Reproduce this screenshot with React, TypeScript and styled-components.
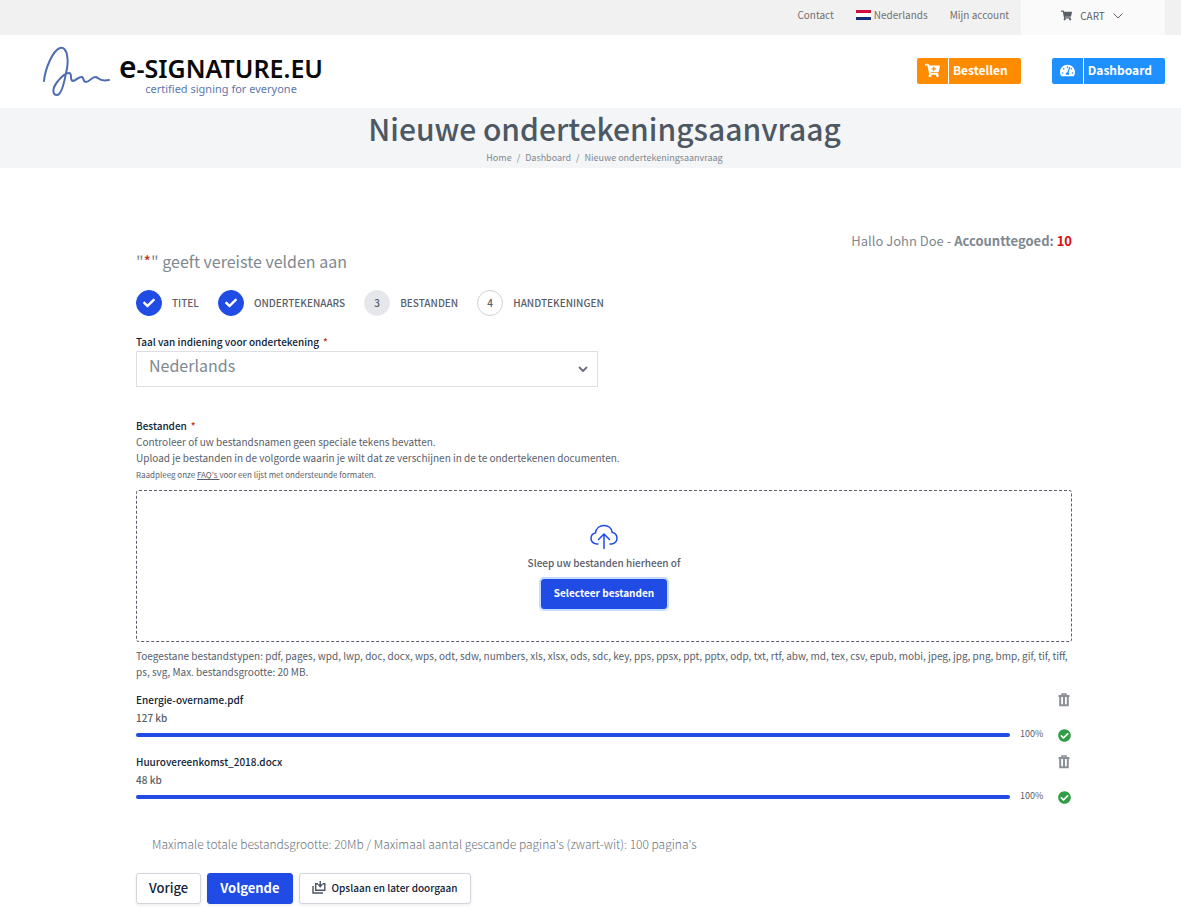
import React from "react";
import styled, { createGlobalStyle } from "styled-components";
import { FaShoppingCart, FaCartPlus, FaTachometerAlt, FaCheck, FaCheckCircle } from "react-icons/fa";

const blue = "#204ce5";

const GlobalStyle = createGlobalStyle`
  *, *::before, *::after { box-sizing: border-box; }
  body {
    margin: 0;
    background: #fff;
    color: #808890;
    font-family: "Noto Sans CJK JP", "Noto Sans", sans-serif;
    font-size: 11px;
    line-height: 16px;
  }
  a { color: inherit; text-decoration: none; }
  button, select { font-family: inherit; cursor: pointer; }
`;

const TopBar = styled.div`
  display: flex;
  justify-content: flex-end;
  height: 35px;
  padding-right: 16px;
  background: #f1f1f1;
`;

const TopNav = styled.nav`
  display: flex;
  align-items: center;
  gap: 22px;
  padding: 0 12px 5px 0;
  font-size: 10px;
  color: #707070;
`;

const TopLink = styled.a`
  display: flex;
  align-items: center;
  gap: 3px;
`;

const Flag = styled.span`
  width: 15px;
  height: 10px;
  background: linear-gradient(#d0103a 0 33%, #fff 33% 67%, #14307c 67%);
`;

const CartButton = styled.button`
  display: flex;
  align-items: center;
  justify-content: center;
  gap: 8px;
  width: 144px;
  padding: 0 2px 4px 0;
  border: 0;
  background: #fafafa;
  color: #5a5f66;
  font-size: 10px;
`;

const Header = styled.header`
  display: flex;
  align-items: center;
  justify-content: space-between;
  height: 73px;
  padding: 0 16px 0 40px;
`;

const Logo = styled.a`
  display: flex;
  align-items: center;
  gap: 7px;
`;

const LogoText = styled.span`
  display: flex;
  flex-direction: column;
  align-items: center;
  padding-top: 6px;
  font-family: "Noto Sans", sans-serif;
`;

const LogoName = styled.span`
  color: #0a0a0a;
  font-size: 25px;
  font-weight: 600;
  line-height: 27px;
`;

const LogoInitial = styled.span`
  font-size: 30px;
`;

const Tagline = styled.span`
  color: #5c77ad;
  font-size: 11px;
  line-height: 14px;
`;

const HeaderActions = styled.div`
  display: flex;
  gap: 31px;
  padding-bottom: 2px;
`;

const ActionLink = styled.a<{ $color: string }>`
  display: flex;
  height: 26px;
  border-radius: 2px;
  background: ${(p) => p.$color};
  color: #fff;
  font-size: 12px;
  font-weight: 700;
  line-height: 24px;
`;

const ActionIcon = styled.span`
  display: flex;
  align-items: center;
  justify-content: center;
  width: 32px;
  border-right: 1px solid #fff;
  font-size: 15px;
`;

const ActionText = styled.span`
  padding: 0 13px 0 4px;
`;

const TitleBand = styled.section`
  height: 60px;
  padding-left: 28px;
  background: #f3f5f7;
  text-align: center;
`;

const Title = styled.h1`
  margin: 0;
  color: #4d5863;
  font-size: 30px;
  font-weight: 500;
  line-height: 41px;
`;

const Breadcrumb = styled.nav`
  display: flex;
  justify-content: center;
  gap: 5px;
  font-size: 9px;
  line-height: 17px;
`;

const Main = styled.main`
  padding: 64px 109px 15px 136px;
`;

const Greeting = styled.p`
  margin: 0;
  text-align: right;
  font-size: 13px;
  line-height: 18px;
`;

const Credit = styled.b`
  color: #d80b0b;
`;

const RequiredNote = styled.p`
  margin: 0;
  font-size: 16px;
  line-height: 22px;
`;

const Star = styled.span`
  color: #c02b0a;
`;

const Steps = styled.ol`
  display: flex;
  gap: 19px;
  margin: 18px 0;
  padding: 0;
  list-style: none;
`;

const Step = styled.li`
  display: flex;
  align-items: center;
  gap: 10px;
  color: #585e6a;
  font-size: 10px;
  font-weight: 500;
`;

const StepCircle = styled.span<{ $state: "done" | "current" | "todo" }>`
  display: flex;
  align-items: center;
  justify-content: center;
  width: 26px;
  height: 26px;
  border: 1px solid ${(p) => ({ done: blue, current: "#e5e7eb", todo: "#cfd3d9" })[p.$state]};
  border-radius: 50%;
  background: ${(p) => ({ done: blue, current: "#e5e7eb", todo: "#fff" })[p.$state]};
  color: ${(p) => (p.$state === "done" ? "#fff" : "#585e6a")};
`;

const Label = styled.label`
  display: block;
  color: #112337;
  font-size: 10px;
  font-weight: 500;
  line-height: 16px;
`;

const LabelStar = styled(Star)`
  margin-left: 4px;
`;

const SelectBox = styled.div`
  display: grid;
  width: 50%;
  max-width: 462px;
  margin: 1px 0 31px;
  align-items: center;

  > * { grid-area: 1 / 1; }
  > svg {
    justify-self: end;
    margin-right: 10px;
    pointer-events: none;
  }
`;

const Select = styled.select`
  width: 100%;
  height: 36px;
  padding: 0 12px 8px;
  appearance: none;
  border: 1px solid #dcdfe3;
  border-radius: 0;
  background: #fff;
  color: #808890;
  font-size: 16px;
`;

const Description = styled.p`
  margin: 0;
  color: #585e6a;
  font-size: 10px;
  line-height: 16px;
`;

const SmallDescription = styled(Description)`
  font-size: 8px;
  line-height: 18px;

  a { text-decoration: underline; }
`;

const DropZone = styled.div`
  display: flex;
  flex-direction: column;
  align-items: center;
  height: 152px;
  margin: 6px 0;
  padding-top: 33px;
  border: 1px dashed #585e6a;
  border-radius: 3px;
  color: #585e6a;
  font-size: 10px;
  font-weight: 500;
  line-height: 16px;
`;

const DropText = styled.span`
  margin: 5px 0 8px;
`;

const Button = styled.button<{ $primary?: boolean; $size?: number }>`
  display: flex;
  align-items: center;
  gap: 6px;
  height: 31px;
  padding: 0 12px 3px;
  border: 1px solid ${(p) => (p.$primary ? blue : "#d2d5db")};
  border-radius: 3px;
  background: ${(p) => (p.$primary ? blue : "#fff")};
  box-shadow: 0 1px 3px rgba(18, 25, 97, 0.1);
  color: ${(p) => (p.$primary ? "#fff" : "#112337")};
  font-size: ${(p) => p.$size ?? 13}px;
  font-weight: ${(p) => (p.$primary ? 700 : 500)};
`;

const SelectFiles = styled(Button)`
  height: 30px;
  box-shadow: 0 0 0 2px #c3dcff;
`;

const FileList = styled.ul`
  display: flex;
  flex-direction: column;
  gap: 10px;
  margin: 11px 0 0;
  padding: 0;
  list-style: none;
`;

const FileItem = styled.li`
  display: flex;
  flex-direction: column;
`;

const FileHead = styled.div`
  display: flex;
  align-items: center;
  justify-content: space-between;
  padding-right: 2px;
`;

const FileName = styled.span`
  color: #112337;
  font-size: 10px;
  font-weight: 500;
  line-height: 18px;
`;

const FileSize = styled.span`
  color: #585e6a;
  font-size: 10px;
  font-weight: 500;
  line-height: 18px;
`;

const IconButton = styled.button`
  display: flex;
  padding: 0;
  border: 0;
  background: none;
  color: #8b8f97;
`;

const ProgressRow = styled.div`
  display: flex;
  align-items: center;
  height: 16px;
  padding-right: 1px;
  color: #2f9e44;
`;

const Track = styled.div`
  flex: 1;
  height: 4px;
  border-radius: 2px;
  background: #e5e7eb;
`;

const Fill = styled.div`
  height: 100%;
  border-radius: 2px;
  background: ${blue};
`;

const Percent = styled.span`
  width: 48px;
  padding: 0 0 2px 10px;
  color: #585e6a;
  font-size: 9px;
  line-height: 14px;
`;

const Limits = styled.p`
  margin: 30px 16px 20px;
  color: #69717a;
  font-size: 12px;
  font-weight: 300;
  line-height: 18px;
`;

const Footer = styled.div`
  display: flex;
  gap: 6px;
`;

const SignatureMark = () => (
  <svg width="72" height="52" viewBox="0 0 72 52" fill="none" stroke="#4d6db0" strokeWidth="2" strokeLinecap="round" strokeLinejoin="round" aria-hidden="true">
    <path d="M4 35C5 24 12 5 20 2C28 0 29 16 26 27C24 38 21 49 17 49C12 49 12 42 18 35C22 30 26 27 29 27C33 27 29 35 33 35C37 34 39 30 42 31C44 32 43 36 46 36C50 36 52 30 56 31C59 32 59 36 69 34" />
  </svg>
);

const ThinChevron = () => (
  <svg width="10" height="6" viewBox="0 0 10 6" fill="none" stroke="currentColor" aria-hidden="true">
    <path d="M.5 .5 5 5 9.500 .5" />
  </svg>
);

const SelectChevron = () => (
  <svg width="10" height="7" viewBox="0 0 10 7" fill="none" stroke="#6a707a" strokeWidth="1.800" strokeLinecap="round" strokeLinejoin="round" aria-hidden="true">
    <path d="M1.500 1.500 5 5 8.500 1.500" />
  </svg>
);

const UploadCloud = () => (
  <svg width="28" height="26" viewBox="0 0 28 26" fill="none" stroke={blue} strokeWidth="1.500" strokeLinecap="round" strokeLinejoin="round" aria-hidden="true">
    <path d="M8 20H7C3.500 20 1 17.500 1 14.500C1 11.500 3 9.500 5.500 9C6 4.500 9.500 1.500 14 1.500C18.500 1.500 21.500 4.500 22.300 8.500C25 9 27 11.500 27 14.300C27 17.500 24.500 20 21.500 20H20" />
    <path d="M14 24.500V10.500M8.500 15.500 14 10l5.500 5.500" />
  </svg>
);

const TrashIcon = () => (
  <svg width="12" height="14" viewBox="0 0 12 14" fill="none" stroke="currentColor" aria-hidden="true">
    <path d="M.5 3H11.500" strokeWidth="2" />
    <path d="M4 2V1H8V2" strokeWidth="1.500" />
    <path d="M2.200 3.500V12.200H9.800V3.500" strokeWidth="2" />
    <path d="M6 4V12" strokeWidth="2" />
  </svg>
);

const SaveIcon = () => (
  <svg width="14" height="13" viewBox="0 0 14 13" fill="none" stroke="#4a5663" strokeWidth="1.400" aria-hidden="true">
    <path d="M1 5V12H11" />
    <path d="M6 2.700H3.700V9.300H12.800V2.700H10.500" />
    <path d="M8.250 0V4" />
    <path d="M5.200 3.200H11.300L8.250 6.800Z" fill="#4a5663" stroke="none" />
  </svg>
);

const steps = [
  { label: "TITEL", state: "done" },
  { label: "ONDERTEKENAARS", state: "done" },
  { label: "BESTANDEN", state: "current" },
  { label: "HANDTEKENINGEN", state: "todo" },
] as const;

const files = [
  { name: "Energie-overname.pdf", size: "127 kb", progress: 100 },
  { name: "Huurovereenkomst_2018.docx", size: "48 kb", progress: 100 },
];

export default function App() {
  return (
    <>
      <GlobalStyle />
      <TopBar>
        <TopNav>
          <TopLink href="#contact">Contact</TopLink>
          <TopLink href="#taal"><Flag />Nederlands</TopLink>
          <TopLink href="#account">Mijn account</TopLink>
        </TopNav>
        <CartButton><FaShoppingCart size={11} />CART<ThinChevron /></CartButton>
      </TopBar>
      <Header>
        <Logo href="#home">
          <SignatureMark />
          <LogoText>
            <LogoName><LogoInitial>e</LogoInitial>-SIGNATURE.EU</LogoName>
            <Tagline>certified signing for everyone</Tagline>
          </LogoText>
        </Logo>
        <HeaderActions>
          <ActionLink href="#bestellen" $color="#ff8c00">
            <ActionIcon><FaCartPlus /></ActionIcon>
            <ActionText>Bestellen</ActionText>
          </ActionLink>
          <ActionLink href="#dashboard" $color="#1e90ff">
            <ActionIcon><FaTachometerAlt /></ActionIcon>
            <ActionText>Dashboard</ActionText>
          </ActionLink>
        </HeaderActions>
      </Header>
      <TitleBand>
        <Title>Nieuwe ondertekeningsaanvraag</Title>
        <Breadcrumb>
          <a href="#home">Home</a>
          <span>/</span>
          <a href="#dashboard">Dashboard</a>
          <span>/</span>
          <span>Nieuwe ondertekeningsaanvraag</span>
        </Breadcrumb>
      </TitleBand>
      <Main>
        <Greeting>Hallo John Doe - <b>Accounttegoed:</b> <Credit>10</Credit></Greeting>
        <RequiredNote>"<Star>*</Star>" geeft vereiste velden aan</RequiredNote>
        <Steps>
          {steps.map((s, i) => (
            <Step key={s.label}>
              <StepCircle $state={s.state}>{s.state === "done" ? <FaCheck size={12} /> : i + 1}</StepCircle>
              {s.label}
            </Step>
          ))}
        </Steps>
        <Label htmlFor="taal">Taal van indiening voor ondertekening<LabelStar>*</LabelStar></Label>
        <SelectBox>
          <Select id="taal" defaultValue="nl">
            <option value="nl">Nederlands</option>
          </Select>
          <SelectChevron />
        </SelectBox>
        <Label as="div">Bestanden<LabelStar>*</LabelStar></Label>
        <Description>Controleer of uw bestandsnamen geen speciale tekens bevatten.</Description>
        <Description>Upload je bestanden in de volgorde waarin je wilt dat ze verschijnen in de te ondertekenen documenten.</Description>
        <SmallDescription>Raadpleeg onze <a href="#faq">FAQ's </a>voor een lijst met ondersteunde formaten.</SmallDescription>
        <DropZone>
          <UploadCloud />
          <DropText>Sleep uw bestanden hierheen of</DropText>
          <SelectFiles $primary $size={10}>Selecteer bestanden</SelectFiles>
        </DropZone>
        <Description>
          Toegestane bestandstypen: pdf, pages, wpd, lwp, doc, docx, wps, odt, sdw, numbers, xls, xlsx, ods, sdc, key, pps, ppsx, ppt, pptx, odp, txt, rtf, abw, md, tex, csv, epub, mobi, jpeg, jpg, png, bmp, gif, tif, tiff, ps, svg, Max. bestandsgrootte: 20 MB.
        </Description>
        <FileList>
          {files.map((f) => (
            <FileItem key={f.name}>
              <FileHead>
                <FileName>{f.name}</FileName>
                <IconButton aria-label={`Verwijder ${f.name}`}><TrashIcon /></IconButton>
              </FileHead>
              <FileSize>{f.size}</FileSize>
              <ProgressRow>
                <Track role="progressbar" aria-valuenow={f.progress} aria-label={f.name}>
                  <Fill style={{ width: `${f.progress}%` }} />
                </Track>
                <Percent>{f.progress}%</Percent>
                <FaCheckCircle size={13} />
              </ProgressRow>
            </FileItem>
          ))}
        </FileList>
        <Limits>Maximale totale bestandsgrootte: 20Mb / Maximaal aantal gescande pagina's (zwart-wit): 100 pagina's</Limits>
        <Footer>
          <Button>Vorige</Button>
          <Button $primary>Volgende</Button>
          <Button $size={10}><SaveIcon />Opslaan en later doorgaan</Button>
        </Footer>
      </Main>
    </>
  );
}
